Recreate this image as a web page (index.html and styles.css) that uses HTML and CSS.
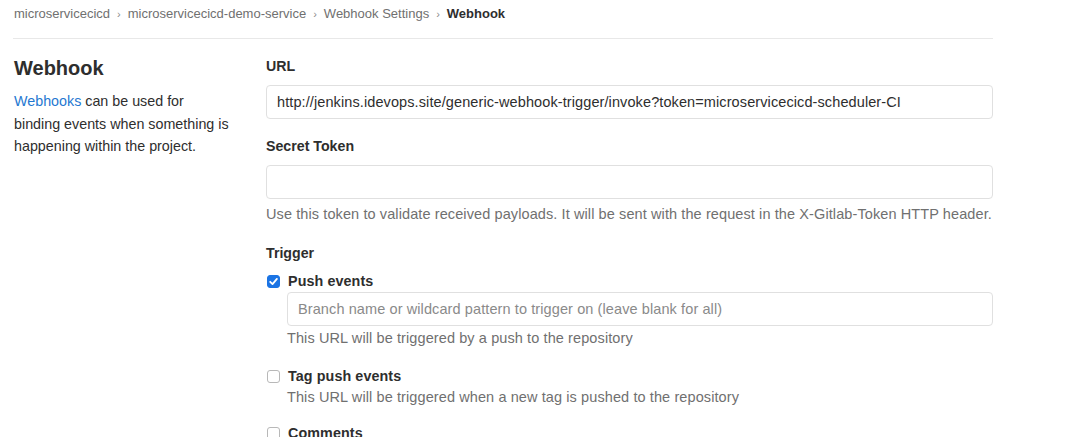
FILE: index.html
```html
<!DOCTYPE html>
<html>
<head>
<meta charset="utf-8">
<link rel="stylesheet" href="styles.css">
</head>
<body>
<div class="page">
  <nav class="breadcrumb">
    <span class="crumb">microservicecicd</span>
    <span class="sep">›</span>
    <span class="crumb">microservicecicd-demo-service</span>
    <span class="sep">›</span>
    <span class="crumb">Webhook Settings</span>
    <span class="sep">›</span>
    <span class="crumb current">Webhook</span>
  </nav>
  <div class="settings">
    <div class="side">
      <h4 class="side-title">Webhook</h4>
      <p class="side-desc"><a class="link">Webhooks</a> can be used for binding events when something is happening within the project.</p>
    </div>
    <div class="form">
      <div class="group">
        <label class="label">URL</label>
        <div class="input">http://jenkins.idevops.site/generic-webhook-trigger/invoke?token=microservicecicd-scheduler-CI</div>
      </div>
      <div class="group group-token">
        <label class="label">Secret Token</label>
        <div class="input"></div>
        <p class="help">Use this token to validate received payloads. It will be sent with the request in the X-Gitlab-Token HTTP header.</p>
      </div>
      <div class="group group-trigger">
        <label class="label">Trigger</label>
        <div class="option">
          <span class="check checked"><svg viewBox="0 0 13 13" width="13" height="13"><path d="M3.2 6.8 L5.5 9.1 L9.9 3.9" fill="none" stroke="#fff" stroke-width="1.8" stroke-linecap="round" stroke-linejoin="round"/></svg></span>
          <span class="option-title">Push events</span>
        </div>
        <div class="option-body">
          <div class="input placeholder">Branch name or wildcard pattern to trigger on (leave blank for all)</div>
          <p class="help help-tight">This URL will be triggered by a push to the repository</p>
        </div>
        <div class="option option-next">
          <span class="check"></span>
          <span class="option-title">Tag push events</span>
        </div>
        <div class="option-body">
          <p class="help help-tag">This URL will be triggered when a new tag is pushed to the repository</p>
        </div>
        <div class="option option-next2">
          <span class="check"></span>
          <span class="option-title">Comments</span>
        </div>
      </div>
    </div>
  </div>
</div>
</body>
</html>
```
FILE: styles.css
```css
html, body {
  margin: 0;
  padding: 0;
  background: #fff;
  overflow: hidden;
}
body {
  font-family: "Liberation Sans", Arial, sans-serif;
  color: #2e2e2e;
  font-size: 14px;
}
.page {
  width: 980px;
  padding-left: 13px;
}
.breadcrumb {
  display: flex;
  align-items: center;
  padding: 5px 0 15px 1px;
  line-height: 18px;
  border-bottom: 1px solid #e8e8e8;
  font-size: 13px;
  color: #707070;
}
.sep {
  margin: 0 7px;
  font-size: 11px;
  color: #8c8c8c;
}
.crumb.current {
  color: #2e2e2e;
  font-weight: bold;
}
.settings {
  display: grid;
  grid-template-columns: 253px 727px;
  padding-top: 17px;
}
.side {
  padding-left: 1px;
}
.side-title {
  margin: 0;
  font-size: 20px;
  line-height: 24px;
  font-weight: bold;
  color: #2e2e2e;
}
.side-desc {
  margin: 10px 0 0;
  width: 217px;
  font-size: 14.3px;
  line-height: 22.5px;
}
.link {
  color: #1f78d1;
}
.label {
  display: block;
  font-weight: bold;
  font-size: 14.2px;
  line-height: 20px;
  margin-bottom: 9px;
}
.input {
  box-sizing: border-box;
  height: 34px;
  border: 1px solid #e0e0e0;
  border-radius: 4px;
  padding: 0 10px;
  line-height: 32px;
  font-size: 14.5px;
  letter-spacing: 0.1px;
  color: #2e2e2e;
  white-space: nowrap;
  overflow: hidden;
}
.input.placeholder {
  color: #8a8a8a;
}
.group-token {
  margin-top: 17px;
}
.help {
  margin: 6px 0 0;
  line-height: 18px;
  font-size: 14.5px;
  letter-spacing: 0.1px;
  color: #707070;
}
.group-trigger {
  margin-top: 20px;
}
.group-trigger .label {
  margin-bottom: 8px;
}
.option {
  display: flex;
  align-items: center;
  line-height: 20px;
}
.option-title {
  font-weight: bold;
  font-size: 14.3px;
  letter-spacing: 0.1px;
}
.check {
  box-sizing: border-box;
  width: 13px;
  height: 13px;
  border: 1px solid #b8b8b8;
  border-radius: 3px;
  margin: 1px 8px 0 1px;
  display: flex;
  background: #fff;
}
.check.checked {
  background: #1b74e4;
  border-color: #1b74e4;
}
.check svg {
  margin: -1px;
}
.option-body {
  padding-left: 21px;
}
.option-body .input {
  margin-top: 1px;
}
.help-tight {
  margin-top: 3px;
}
.help-tag {
  margin-top: 2px;
}
.option-next {
  margin-top: 19px;
}
.option-next2 {
  margin-top: 17px;
}
```
